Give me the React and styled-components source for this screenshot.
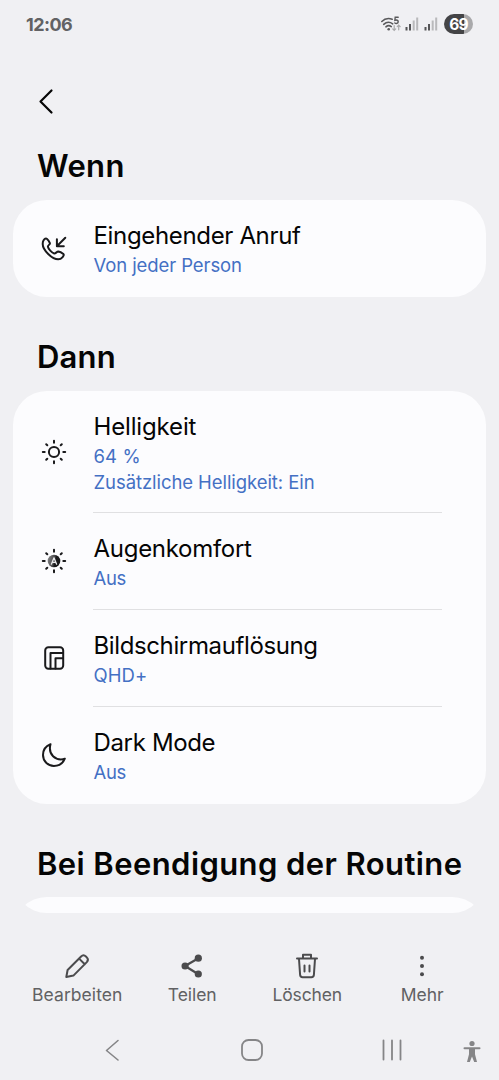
import React from "react";
import styled, { createGlobalStyle } from "styled-components";

const Global = createGlobalStyle`
  *, *::before, *::after { box-sizing: border-box; }
  body { margin: 0; background: #f0f0f3; }
`;

const Screen = styled.div`
  width: 499px;
  height: 1080px;
  overflow: hidden;
  display: flex;
  flex-direction: column;
  background: #f0f0f3;
  color: #050505;
  font-family: Inter, Roboto, "Liberation Sans", sans-serif;
  svg { display: block; flex: none; overflow: visible; }
`;

const StatusBar = styled.header`
  height: 48px;
  padding: 0 26px;
  display: flex;
  align-items: center;
  justify-content: space-between;
`;

const Clock = styled.time`
  font-size: 18px;
  font-weight: 700;
  color: #626264;
  letter-spacing: ${(p) => p.$track}px;
`;

const StatusIcons = styled.div`
  display: flex;
  align-items: center;
  gap: 5px;
`;

const Battery = styled.div`
  width: 29px;
  height: 20px;
  margin-left: 1px;
  border-radius: 10px;
  display: grid;
  place-items: center;
  background: linear-gradient(90deg, #444446 69%, #a9a9ab 69%);
  color: #fff;
  font-size: 15.5px;
  font-weight: 700;
  letter-spacing: -0.8px;
`;

const AppBar = styled.div`
  height: 94px;
  padding: 41px 0 0 39px;
`;

const ScrollArea = styled.main`
  height: 771px;
  margin: 0 13px;
  overflow: hidden;
  border-radius: 0 0 34px 34px;
`;

const Heading = styled.h1`
  margin: 0;
  height: ${(p) => p.$height}px;
  padding: ${(p) => p.$top}px 0 0 24px;
  font-size: 31px;
  line-height: 38px;
  font-weight: 600;
  white-space: nowrap;
  letter-spacing: ${(p) => p.$track}px;
`;

const Card = styled.section`
  min-height: 97px;
  border-radius: 34px;
  background: #fcfcfe;
`;

const Row = styled.div`
  display: flex;
  align-items: center;
  height: ${(p) => p.$height || 97}px;
  padding-right: 44px;
`;

const IconSlot = styled.div`
  width: 80px;
  padding: 0 0 1px 27px;
  color: #1a1a1c;
`;

const RowText = styled.div`
  flex: 1;
  height: 100%;
  padding-top: 19px;
  border-bottom: ${(p) => (p.$last ? "none" : "1px solid #e0e0e2")};
  white-space: nowrap;
`;

const Title = styled.div`
  padding-left: 0.5px;
  font-size: 24px;
  line-height: 33px;
  letter-spacing: ${(p) => p.$track}px;
`;

const Detail = styled.div`
  padding-left: 0.5px;
  font-size: 18.5px;
  line-height: 26px;
  color: #4470c4;
  letter-spacing: ${(p) => p.$track}px;
`;

const ActionBar = styled.nav`
  height: 107px;
  padding: 39px 19px 0;
  display: grid;
  grid-template-columns: repeat(4, 115px);
`;

const Action = styled.div`
  display: flex;
  flex-direction: column;
  align-items: center;
  gap: 4px;
  color: #4b4b4d;
`;

const ActionLabel = styled.span`
  padding-left: 1.5px;
  font-size: 17.5px;
  line-height: 22px;
  color: #616163;
  white-space: nowrap;
  letter-spacing: ${(p) => p.$track}px;
`;

const SystemNav = styled.footer`
  height: 60px;
  padding: 19px 0 0 42px;
  display: grid;
  grid-template-columns: repeat(3, 140px) 19px;
  justify-items: center;
  align-items: start;
  color: #858587;
`;

const Icon = ({ w = 28, h = 28, sw = 2, children }) => (
  <svg width={w} height={h} viewBox={`0 0 ${w} ${h}`} fill="none" stroke="currentColor" strokeWidth={sw} strokeLinecap="round" strokeLinejoin="round">
    {children}
  </svg>
);

const Signal = () => (
  <svg width="14" height="16" viewBox="0 0 14 16">
    <rect x="0.5" y="11" width="2" height="3.5" fill="#555557" />
    <rect x="4" y="8" width="2" height="6.5" fill="#555557" />
    <rect x="7.7" y="4.5" width="2" height="10" fill="#b9b9bb" />
    <rect x="11.2" y="1.5" width="2" height="13" fill="#b9b9bb" />
  </svg>
);

const Rays = () => (
  <path d="M14 2.800v1.900M14 23.300v1.900M2.800 14h1.900M23.300 14h1.900M6.200 6.200l1.100 1.100M20.700 20.700l1.100 1.100M21.800 6.200l-1.100 1.100M7.300 20.700l-1.100 1.100" />
);

const Wifi = () => (
  <svg width="20" height="18" viewBox="0 0 20 18" fill="none" stroke="#59595b" strokeWidth="1.6" strokeLinecap="round">
    <path d="M1.800 6.500C4.600 3.600 8.600 3 12.200 4.200M3.700 9.300c2.600-2.300 6.200-2.500 9-.5M5.900 11.800c1.600-1.400 3.700-1.500 5.400-.2" />
    <circle cx="8.700" cy="14.200" r="1.300" fill="#59595b" stroke="none" />
    <path d="M18.200 2.300h-3l-.3 3c1.600-.6 3.300 0 3.300 1.500 0 1.600-2.100 2.100-3.400 1.200" strokeWidth="1.4" />
    <path d="M14.200 10.700v4.500m-1.500-1.400 1.500 1.500 1.500-1.500M18.700 14.800v-4.500m-1.500 1.400 1.500-1.500 1.500 1.500" stroke="#a9a9ab" strokeWidth="1.200" />
  </svg>
);

const IncomingCall = () => (
  <Icon>
    <path d="M3.600 6.300C4.700 4.700 5.900 4 6.800 4.700c1 .8 2.700 3.400 3.100 4.500.4 1.300-2.200 2-2 3.500.3 2.200 3.900 6.100 6.300 6.800 1.400.4 2.500-2 4.200-1.900 1.100.1 4 1.600 5 2.400 1.400 1.100-1.700 5.300-5.200 5.300C12.200 25.300 2.700 16.200 2.700 10c0-1.500.3-2.800.9-3.700Z" />
    <path d="M25.300 3.800L17.600 11.500M16.900 5.300v6.900h6.900" />
  </Icon>
);

const Sun = () => (
  <Icon>
    <circle cx="14" cy="14" r="5.1" />
    <Rays />
  </Icon>
);

const EyeComfort = () => (
  <Icon>
    <defs>
      <linearGradient id="lens" x1="0" x2="1" y1="0" y2="0.25">
        <stop offset="0" stopColor="#88888a" />
        <stop offset="0.55" stopColor="#4b4b4d" />
        <stop offset="0.7" stopColor="#18181a" />
      </linearGradient>
    </defs>
    <circle cx="14" cy="14" r="6.3" fill="url(#lens)" stroke="none" />
    <path d="M11.400 17.200 14 10.800l2.600 6.400M12.400 15.300h3.200" stroke="#e9e9eb" strokeWidth="1.3" />
    <Rays />
  </Icon>
);

const Resolution = () => (
  <Icon>
    <rect x="5.2" y="3.3" width="18" height="21.5" rx="3.2" />
    <path d="M10.500 24.500V9h12.500M15.500 24.500v-10.300h7.500" />
  </Icon>
);

const Moon = () => (
  <Icon>
    <path d="M10.500 3.200C5.900 5 3 9.100 3 14c0 6 4.900 10.900 10.900 10.900 5 0 9.200-3 10.900-7.200-1.200.5-2.500.7-3.900.7-6.200 0-11-4.800-11-11 0-1.500.2-2.900.6-4.200Z" />
  </Icon>
);

const Pencil = () => (
  <Icon>
    <path d="M3.300 25l1.300-7L18.100 4.500c1.500-1.500 3.500-1.300 4.800 0l.9.900c1.300 1.300 1.300 3.300 0 4.700L10.400 23.600ZM16.100 6.600l5.700 5.700" />
  </Icon>
);

const Share = () => (
  <Icon>
    <path d="M20 6.500L7 14l13 8" strokeWidth="2.2" />
    <g fill="currentColor" stroke="none">
      <circle cx="20.300" cy="6.200" r="3.6" />
      <circle cx="7.100" cy="14" r="3.6" />
      <circle cx="20.300" cy="22" r="3.6" />
    </g>
  </Icon>
);

const Trash = () => (
  <Icon>
    <path d="M4 6.500h20M10 6V2.800h8V6M6 7l1.100 15.800a2.500 2.500 0 0 0 2.500 2.400h8.800a2.500 2.500 0 0 0 2.500-2.400L22 7M11.500 13.500v6M16.500 13.500v6" />
  </Icon>
);

const More = () => (
  <Icon>
    <g fill="currentColor" stroke="none">
      <circle cx="14" cy="5.8" r="2" />
      <circle cx="14" cy="14" r="2" />
      <circle cx="14" cy="22.2" r="2" />
    </g>
  </Icon>
);

const effects = [
  { icon: <Sun />, title: "Helligkeit", track: -0.15, height: 122, details: [["64 %", 0.1], ["Zusätzliche Helligkeit: Ein", -0.07]] },
  { icon: <EyeComfort />, title: "Augenkomfort", track: -0.28, details: [["Aus", -0.3]] },
  { icon: <Resolution />, title: "Bildschirmauflösung", track: -0.38, details: [["QHD+", 0.1]] },
  { icon: <Moon />, title: "Dark Mode", track: -0.35, details: [["Aus", -0.3]] },
];

const actions = [
  { icon: <Pencil />, label: "Bearbeiten", track: 0.05 },
  { icon: <Share />, label: "Teilen", track: -0.05 },
  { icon: <Trash />, label: "Löschen", track: -0.15 },
  { icon: <More />, label: "Mehr", track: 0 },
];

const RoutineRow = ({ icon, title, track, details, height, last }) => (
  <Row $height={height}>
    <IconSlot>{icon}</IconSlot>
    <RowText $last={last}>
      <Title $track={track}>{title}</Title>
      {details.map(([text, t]) => (
        <Detail key={text} $track={t}>{text}</Detail>
      ))}
    </RowText>
  </Row>
);

export default function App() {
  return (
    <Screen>
      <Global />
      <StatusBar>
        <Clock $track={-0.55}>12:06</Clock>
        <StatusIcons>
          <Wifi />
          <Signal />
          <Signal />
          <Battery>69</Battery>
        </StatusIcons>
      </StatusBar>
      <AppBar>
        <Icon w={14} h={24} sw={2.2}>
          <path d="M12.500 1.500L1.500 12.500l11 11" />
        </Icon>
      </AppBar>
      <ScrollArea>
        <Heading $height={58} $top={5} $track={0.35}>Wenn</Heading>
        <Card>
          <RoutineRow icon={<IncomingCall />} title="Eingehender Anruf" track={-0.34} details={[["Von jeder Person", -0.09]]} last />
        </Card>
        <Heading $height={94} $top={41} $track={0.2}>Dann</Heading>
        <Card>
          {effects.map((e, i) => (
            <RoutineRow key={e.title} {...e} last={i === effects.length - 1} />
          ))}
        </Card>
        <Heading $height={93} $top={41} $track={0.42}>Bei Beendigung der Routine</Heading>
        <Card />
      </ScrollArea>
      <ActionBar>
        {actions.map((a) => (
          <Action key={a.label}>
            {a.icon}
            <ActionLabel $track={a.track}>{a.label}</ActionLabel>
          </Action>
        ))}
      </ActionBar>
      <SystemNav>
        <Icon w={14} h={22} sw={1.6}>
          <path d="M13 1.500L1.500 11.500 13 21" />
        </Icon>
        <Icon w={22} h={22} sw={1.8}>
          <rect x="1" y="1" width="20" height="20" rx="6.5" />
        </Icon>
        <Icon w={20} h={22} sw={1.8}>
          <path d="M1.500 1.500v19M10 1.500v19M18.500 1.500v19" />
        </Icon>
        <Icon w={18} h={24}>
          <circle cx="9" cy="4.500" r="2.6" fill="currentColor" stroke="none" />
          <path d="M1.500 9.200h15" />
          <path d="M6 9.200h6v6l2 7.700h-2.800L9 17.400l-2.200 5.500H4l2-7.700Z" fill="currentColor" stroke="none" />
        </Icon>
      </SystemNav>
    </Screen>
  );
}
